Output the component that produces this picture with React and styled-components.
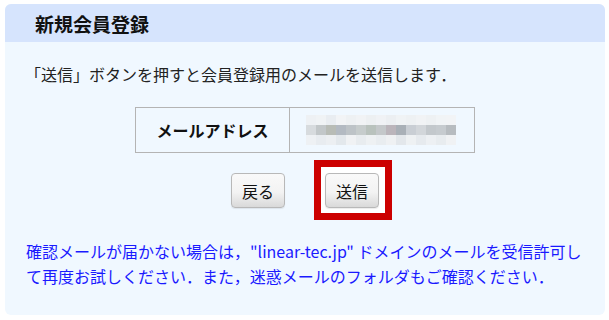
import React from 'react';
import styled, { createGlobalStyle } from 'styled-components';

const GlobalStyle = createGlobalStyle`
  html, body {
    margin: 0;
    padding: 0;
    background: #ffffff;
  }
  body {
    font-family: 'Noto Sans CJK JP', 'Liberation Sans', sans-serif;
  }
`;

const Card = styled.section`
  margin: 4px 4px 0 5px;
  width: 600px;
  height: 311px;
  background: #f0f8ff;
  border-radius: 6px;
  overflow: hidden;
  display: flex;
  flex-direction: column;
`;

const Header = styled.h2`
  margin: 0;
  height: 38px;
  display: flex;
  align-items: center;
  padding-left: 30px;
  background: #d6e4fd;
  color: #111;
  font-size: 19px;
  font-weight: bold;
`;

const Lead = styled.p`
  margin: 20px 0 0 20px;
  font-size: 16px;
  line-height: 24px;
  color: #222;
`;

const Table = styled.table`
  margin: 21px 0 0 130px;
  width: 340px;
  table-layout: fixed;
  border-collapse: collapse;
`;

const Label = styled.th`
  width: 153px;
  height: 44px;
  border: 1px solid #b4b4b4;
  font-size: 16px;
  font-weight: bold;
  color: #111;
  padding: 0;
`;

const Value = styled.td`
  height: 44px;
  border: 1px solid #b4b4b4;
  padding: 0 0 0 16px;
  vertical-align: middle;
  line-height: 0;
`;

const Buttons = styled.div`
  margin-top: 20px;
  display: flex;
  justify-content: center;
  gap: 40px;
`;

const Button = styled.button`
  width: 54px;
  height: 35px;
  padding: 0;
  border: 1px solid #b8b8b8;
  border-radius: 4px;
  background: linear-gradient(#f9f9f9 0%, #f3f3f3 55%, #d9d9d9 100%);
  font-family: 'Noto Sans CJK JP', sans-serif;
  font-size: 16px;
  color: #111;
  box-shadow: 0 1px 1px rgba(0, 0, 0, 0.08);
`;

const Highlight = styled.div`
  position: relative;
  z-index: 0;

  &::before {
    content: '';
    position: absolute;
    z-index: -1;
    top: -13px;
    bottom: -12px;
    left: -11px;
    right: -13px;
    background: #ffffff;
    border: 7px solid #cc0000;
  }
`;

const Notice = styled.p`
  margin: 31px 14px 0 21px;
  font-size: 16px;
  line-height: 25px;
  color: #1a1aff;
`;

const mosaic = [
  ['#eef1f4', '#f0f3f5', '#e9edf1', '#f2f4f6', '#eef1f3', '#f1f3f5', '#edf0f2', '#f0f2f5', '#eceff2', '#f0f3f5', '#eef1f3', '#f1f3f5', '#eef1f3', '#f1f4f6', '#f2f4f6'],
  ['#d7dbde', '#c2c7c9', '#b8bcb6', '#b3bac2', '#bdc3c7', '#c6cccc', '#b9c2bd', '#c4c8ca', '#bbb5bb', '#a9b0b7', '#c9ced4', '#d2d6da', '#c3c8cc', '#c6cbcf', '#b7bcc0'],
  ['#eef1f4', '#e8ecf0', '#eceff2', '#e3e8ec', '#f0f2f4', '#e8ecef', '#eef1f3', '#e9edf0', '#eff1f3', '#e3e7eb', '#eef1f3', '#e6eaee', '#edf0f3', '#e8ecef', '#f0f2f4'],
];

function Mosaic() {
  return (
    <svg width="150" height="30" viewBox="0 0 150 30">
      {mosaic.map((row, r) =>
        row.map((c, i) => (
          <rect key={`${r}-${i}`} x={i * 10} y={r * 10} width="10" height="10" fill={c} />
        ))
      )}
    </svg>
  );
}

export default function App() {
  return (
    <>
      <GlobalStyle />
      <Card>
        <Header>新規会員登録</Header>
        <Lead>「送信」ボタンを押すと会員登録用のメールを送信します．</Lead>
        <Table>
          <tbody>
            <tr>
              <Label>メールアドレス</Label>
              <Value>
                <Mosaic />
              </Value>
            </tr>
          </tbody>
        </Table>
        <Buttons>
          <Button type="button">戻る</Button>
          <Highlight>
            <Button type="button">送信</Button>
          </Highlight>
        </Buttons>
        <Notice>
          確認メールが届かない場合は，"linear-tec.jp" ドメインのメールを受信許可して再度お試しください．また，迷惑メールのフォルダもご確認ください．
        </Notice>
      </Card>
    </>
  );
}
